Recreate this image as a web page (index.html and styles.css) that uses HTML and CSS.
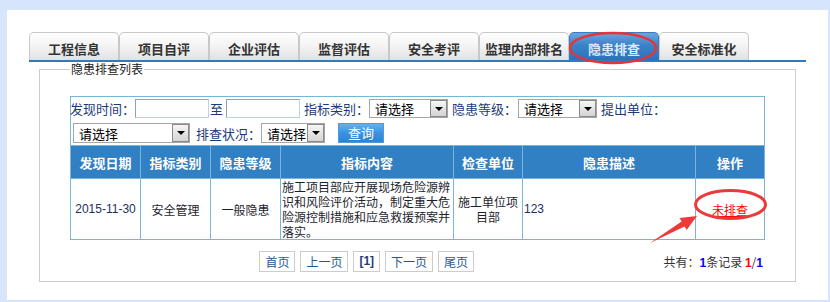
FILE: index.html
```html
<!DOCTYPE html>
<html lang="zh-CN">
<head>
<meta charset="utf-8">
<title>隐患排查</title>
<link rel="stylesheet" href="styles.css">
</head>
<body>
<div class="page">
  <div class="tabs">
    <div class="tab">工程信息</div>
    <div class="tab">项目自评</div>
    <div class="tab">企业评估</div>
    <div class="tab">监督评估</div>
    <div class="tab">安全考评</div>
    <div class="tab">监理内部排名</div>
    <div class="tab active">隐患排查</div>
    <div class="tab">安全标准化</div>
  </div>
  <fieldset class="box">
    <legend class="box-title">隐患排查列表</legend>
    <table class="grid">
      <colgroup>
        <col class="c70"><col class="c70"><col class="c70"><col class="c173"><col class="c69"><col class="c173"><col class="c69">
      </colgroup>
      <tr>
        <td colspan="7" class="filter">
          <div class="frow">
            <span class="lbl first">发现时间：</span>
            <span class="inp w74"></span>
            <span class="lbl to">至</span>
            <span class="inp w74 ml3"></span>
            <span class="lbl ml4">指标类别：</span>
            <span class="sel w79"><span class="sel-text">请选择</span><span class="sel-btn"><i class="tri"></i></span></span>
            <span class="lbl ml4">隐患等级：</span>
            <span class="sel w79 ml1"><span class="sel-text">请选择</span><span class="sel-btn"><i class="tri"></i></span></span>
            <span class="lbl ml4">提出单位：</span>
          </div>
          <div class="frow row2">
            <span class="sel w117 ml2 tall"><span class="sel-text">请选择</span><span class="sel-btn"><i class="tri"></i></span></span>
            <span class="lbl ml6">排查状况：</span>
            <span class="sel w64 tall"><span class="sel-text">请选择</span><span class="sel-btn"><i class="tri"></i></span></span>
            <span class="btn-query">查询</span>
          </div>
        </td>
      </tr>
      <tr class="head">
        <th>发现日期</th><th>指标类别</th><th>隐患等级</th><th>指标内容</th><th>检查单位</th><th>隐患描述</th><th>操作</th>
      </tr>
      <tr class="data">
        <td class="num">2015-11-30</td>
        <td>安全管理</td>
        <td>一般隐患</td>
        <td class="left">施工项目部应开展现场危险源辨识和风险评价活动，制定重大危险源控制措施和应急救援预案并落实。</td>
        <td>施工单位项目部</td>
        <td class="left num">123</td>
        <td><a class="op" href="#">未排查</a></td>
      </tr>
    </table>
    <div class="pager">
      <div class="pages">
        <span class="pbtn">首页</span>
        <span class="pbtn">上一页</span>
        <span class="pbtn cur">[1]</span>
        <span class="pbtn">下一页</span>
        <span class="pbtn">尾页</span>
      </div>
      <div class="total">共有：<b class="blue">1</b>条记录 <b class="red">1</b>/<b class="blue">1</b></div>
    </div>
  </fieldset>
</div>
<svg class="marks" width="830" height="302" viewBox="0 0 830 302">
  <ellipse cx="613" cy="48" rx="43" ry="15" fill="none" stroke="#e83434" stroke-width="2.5"/>
  <ellipse cx="730.5" cy="204.5" rx="35" ry="14" fill="none" stroke="#ea3a3a" stroke-width="3"/>
  <polygon points="650,243 684.6,226.6 686.6,230.1 697,216 679.6,217.9 681.6,221.4" fill="#ef3a3a"/>
</svg>
</body>
</html>
```
FILE: styles.css
```css
html, body {
  margin: 0;
  padding: 0;
}
body {
  background: #d6e5fa;
  width: 830px;
  height: 302px;
  position: relative;
  overflow: hidden;
  font-family: "Liberation Sans", "Noto Sans CJK SC", sans-serif;
  font-size: 12px;
  color: #222;
}
.page {
  background: #fff;
  margin: 10px 2px 0 7px;
  height: 290px;
  box-sizing: border-box;
  padding: 22px 0 0 22px;
}
.tabs {
  display: flex;
  width: 777px;
  height: 28px;
  border-bottom: 2px solid #2e7bbf;
}
.tab {
  width: 90px;
  height: 28px;
  box-sizing: border-box;
  border: 1px solid #c8c8c8;
  border-bottom: none;
  border-radius: 5px 5px 0 0;
  background: linear-gradient(#ffffff, #f4f4f4 45%, #e2e2e2);
  font-family: "Noto Sans CJK SC", sans-serif;
  font-weight: bold;
  font-size: 13px;
  color: #333;
  display: flex;
  align-items: center;
  justify-content: center;
  padding-top: 3px;
}
.tab.active {
  background: linear-gradient(#6aa6e0, #3a82c8 45%, #2c72bb);
  border-color: #3a7cc0;
  color: #dce9fb;
}
.box {
  margin: 0 0 0 10px;
  width: 757px;
  box-sizing: border-box;
  border: 1px solid #cccccc;
  padding: 20px 0 9px 30px;
  min-inline-size: 0;
}
.box-title {
  padding: 0 1px;
  font-size: 12px;
  line-height: 14px;
  color: #222;
  font-family: "Noto Sans CJK SC", sans-serif;
}
.grid {
  width: 695px;
  table-layout: fixed;
  border-collapse: collapse;
  border: 1px solid #78b6d6;
}
.c70 { width: 70px; }
.c69 { width: 69px; }
.c173 { width: 173px; }
.grid td, .grid th {
  border: 1px solid #78b6d6;
  padding: 0;
}
.filter {
  height: 48px;
  vertical-align: top;
}
.frow {
  display: flex;
  align-items: center;
  height: 19px;
  margin-top: 2px;
}
.frow.row2 {
  height: 20px;
  margin-top: 5px;
}
.lbl {
  font-family: "Noto Sans CJK SC", sans-serif;
  font-size: 13px;
  line-height: 19px;
  color: #1d3b78;
  white-space: nowrap;
}
.lbl.first { margin-left: -1px; }
.lbl.to { margin-left: 1px; }
.ml1 { margin-left: 1px; }
.ml2 { margin-left: 2px; }
.ml3 { margin-left: 3px; }
.ml4 { margin-left: 4px; }
.ml6 { margin-left: 6px; }
.inp {
  display: block;
  height: 19px;
  box-sizing: border-box;
  border: 1px solid;
  border-color: #8aa4bf #bcd2e8 #bcd2e8 #8aa4bf;
  background: #fff;
}
.w74 { width: 74px; }
.w79 { width: 79px; }
.w117 { width: 117px; }
.w64 { width: 64px; }
.sel {
  display: flex;
  align-items: center;
  height: 19px;
  box-sizing: border-box;
  border: 1px solid #a6a6a6;
  background: #fff;
}
.sel.tall { height: 20px; }
.sel-text {
  flex: 1;
  padding-left: 5px;
  font-family: "Noto Sans CJK SC", sans-serif;
  font-size: 13px;
  line-height: 17px;
  color: #000;
  overflow: hidden;
  white-space: nowrap;
}
.sel-btn {
  width: 17px;
  height: 100%;
  box-sizing: border-box;
  border: 1px solid #8a8a8a;
  background: linear-gradient(#f6f6f6, #d4d4d4);
  display: flex;
  align-items: center;
  justify-content: center;
}
.tri {
  display: block;
  width: 0;
  height: 0;
  border-left: 4px solid transparent;
  border-right: 4px solid transparent;
  border-top: 4px solid #000;
}
.btn-query {
  margin-left: 13px;
  width: 46px;
  height: 20px;
  box-sizing: border-box;
  border: 1px solid #4c9ae0;
  background: linear-gradient(#62b2f0, #3a92e0 50%, #2a84d6);
  color: #fff;
  font-family: "Noto Sans CJK SC", sans-serif;
  font-size: 13px;
  line-height: 18px;
  text-align: center;
}
.head th {
  height: 32px;
  background: #3180c4;
  color: #fff;
  font-family: "Noto Sans CJK SC", sans-serif;
  font-weight: bold;
  font-size: 13px;
  text-align: center;
}
.data td {
  height: 60px;
  text-align: center;
  vertical-align: middle;
  font-family: "Noto Sans CJK SC", sans-serif;
  font-size: 12px;
  line-height: 15px;
  color: #1e1e2e;
}
.data td.num {
  font-family: "Liberation Sans", sans-serif;
  color: #24305a;
}
.data td.left {
  text-align: left;
  padding-left: 1px;
}
.op {
  color: #f00;
  text-decoration: underline;
  font-size: 12px;
}
.pager {
  display: flex;
  align-items: center;
  width: 695px;
  margin-top: 11px;
}
.pages {
  width: 609px;
  display: flex;
  justify-content: center;
  gap: 5px;
}
.pbtn {
  height: 21px;
  box-sizing: border-box;
  border: 1px solid #cccccc;
  padding: 0 5px;
  font-family: "Noto Sans CJK SC", sans-serif;
  font-size: 12px;
  line-height: 19px;
  color: #1d5a9c;
}
.pbtn.cur {
  font-family: "Liberation Sans", sans-serif;
  font-weight: bold;
  color: #2a3a78;
}
.total {
  flex: 1;
  text-align: right;
  padding-right: 2px;
  font-family: "Noto Sans CJK SC", sans-serif;
  font-size: 12px;
  color: #333;
  white-space: nowrap;
}
.total b {
  font-family: "Liberation Sans", sans-serif;
}
.blue { color: #0000ff; }
.red { color: #ff0000; }
.marks {
  position: absolute;
  left: 0;
  top: 0;
  pointer-events: none;
}
```
